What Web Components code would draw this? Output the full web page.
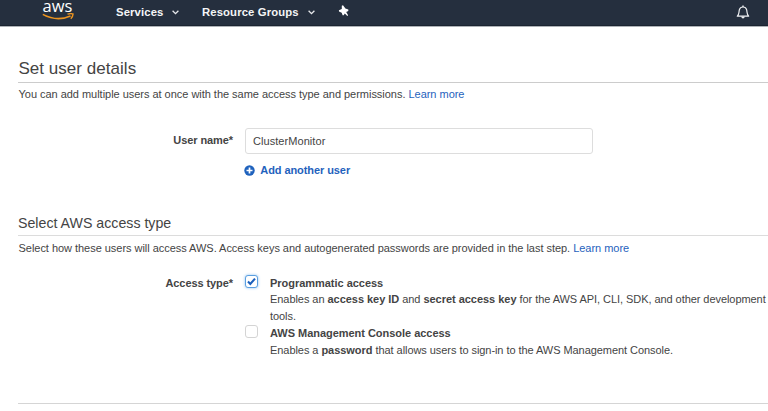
<!DOCTYPE html>
<html lang="en">
<head>
<meta charset="utf-8">
<title>Set user details</title>
<style>
html,body{margin:0;height:100%;overflow:hidden;background:#fff}
body{font:11px/17px "Liberation Sans",Arial,sans-serif;color:#444}
</style>
</head>
<body>
<iam-page></iam-page>
<script>
const define = (name, html) => customElements.define(name, class extends HTMLElement {
  constructor() {
    super();
    this.attachShadow({mode: 'open'}).innerHTML = html;
  }
});

define('aws-logo', `<style>
:host{display:flex;flex-direction:column;width:34px;height:25px;color:#fff}
span{font:16.500px/12px "Open Sans","Noto Sans",sans-serif;height:12px;padding-left:1px;margin-top:0}
svg{display:block;margin-top:1px}
</style><span>aws</span>
<svg width="34" height="9" viewBox="0 0 34 9" fill="none" stroke="#ec9420"><path d="M.8 1.400Q15 9 28.500 3" stroke-width="1.600"/><path d="M25.500 1.200Q29 .2 31 1Q31.200 3.200 28.800 5.700" stroke-width="1.400"/></svg>`);

define('nav-menu', `<style>
:host{display:flex;align-items:center;font-weight:bold;font-size:11.300px;color:#f4f5f6;white-space:nowrap}
span{letter-spacing:var(--track,.12px)}
svg{margin-left:9px}
</style><span><slot></slot></span>
<svg width="7" height="5" viewBox="0 0 7 5" fill="none" stroke="#e8eaed" stroke-width="1.300"><path d="M.6.700 3.500 3.600 6.400.700"/></svg>`);

define('pin-icon', `<style>:host{display:block;width:11px;height:12px}svg{display:block}</style>
<svg width="11" height="12" viewBox="0 0 11 12" fill="#fff"><path d="M3.800 .700 5 .200 7.400 3.400 10.300 4.500 10.300 6.100 8.200 6.900 10.100 10.300 9.300 10.900 6.800 8.600 5.700 10.300 4.600 10.200 3.700 7.800 1 6.500 .9 5.200 3.800 4Z"/></svg>`);

define('bell-icon', `<style>:host{display:block;width:14px;height:14px}svg{display:block}</style>
<svg width="14" height="14" viewBox="0 0 14 14"><path d="M1.300 11.200C3.400 9.400 2.700 7 3.400 4.600 3.900 2.900 5.200 2 7 2s3.100.9 3.600 2.600c.7 2.400 0 4.800 2.100 6.600Z" fill="none" stroke="#eef0f2" stroke-width="1.200" stroke-linejoin="round"/><path d="M6.300.600h1.400v1.500H6.300zM5.200 11.600h3.600q-.3 1.900-1.800 1.900t-1.800-1.900" fill="#eef0f2"/></svg>`);

define('console-header', `<style>
:host{display:flex;box-sizing:border-box;height:26px;padding:0 18px 0 41.500px;background:#252f3e;border-bottom:1px solid #1b2431;box-shadow:0 1px 0 #aeb2b7}
nav{display:flex;align-items:center;height:24px;margin-left:40.500px;flex:1}
.g{margin-left:22.500px;--track:.13px}
pin-icon{margin:-2px 0 0 23px}
bell-icon{margin:5px 0 0}
</style><aws-logo></aws-logo>
<nav><nav-menu>Services</nav-menu><nav-menu class="g">Resource Groups</nav-menu><pin-icon></pin-icon></nav><bell-icon></bell-icon>`);

define('section-title', `<style>
:host{display:block;margin-left:18px;color:#444;border-bottom:1px solid #ccc;box-sizing:border-box;white-space:nowrap}
</style><slot></slot>`);

define('text-link', `<style>:host{color:#1f62bd}</style><slot></slot>`);

define('text-input', `<style>
:host{display:block;box-sizing:border-box;width:348px;height:26px;border:1.500px solid #ddd;border-radius:3px;padding:4px 7px 3px;color:#444;letter-spacing:.06px}
</style><slot></slot>`);

define('add-button', `<style>
:host{display:flex;align-items:center;font-weight:bold;color:#1f62bd;gap:5px;letter-spacing:-.08px;margin-left:-.7px}
svg{display:block}
</style><svg width="11" height="11" viewBox="0 0 11 11"><circle cx="5.500" cy="5.500" r="5.200" fill="#1f62bd"/><path d="M5.500 2.500v6M2.500 5.500h6" stroke="#fff" stroke-width="1.700"/></svg><span><slot></slot></span>`);

define('check-box', `<style>
:host{display:block;box-sizing:border-box;width:13px;height:13px;border:1px solid #d4d4d4;border-radius:3px;background:#fff}
:host([checked]){border-color:#5b9fe0;box-shadow:0 0 3px #8fc1f0}
svg{display:none}
:host([checked]) svg{display:block}
</style><svg width="11" height="11" viewBox="0 0 11 11" fill="none" stroke="#1c60bc" stroke-width="2.100"><path d="M2 5.600 4.300 8 9 2.600"/></svg>`);

define('access-option', `<style>
:host{display:grid;grid-template-columns:13px 1fr;column-gap:12px}
check-box{margin-top:.3px}
</style><check-box></check-box><div><slot></slot></div>`);

define('form-row', `<style>
:host{display:grid;grid-template-columns:233px 1fr;column-gap:12px}
.label{font-weight:bold;text-align:right;color:#444;padding-top:var(--label-top,0);letter-spacing:-.08px}
</style><div class="label"><slot name="label"></slot></div><div><slot></slot></div>`);

define('iam-page', `<style>
:host{display:block;width:768px;height:411px;overflow:hidden}
p{margin:0 0 0 18.500px;white-space:nowrap}
.t1{font-size:17px;line-height:27px;margin-top:29px;height:28px;letter-spacing:.04px;text-indent:.4px}
.p1{margin-top:3px;letter-spacing:-.028px}
.name{margin-top:25px;--label-top:4px}
add-button{margin-top:8px}
.t2{font-size:14.200px;line-height:26px;margin-top:31px;height:26px;border-color:#dcdcdc}
.p2{margin-top:4px;letter-spacing:-.034px}
.type{margin-top:17.600px;line-height:16.800px}
.type div{white-space:nowrap;letter-spacing:-.06px}
.type b{letter-spacing:-.03px}
.end{height:1px;background:#d5d5d5;margin:44.400px 0 0 18px}
</style>
<console-header></console-header>
<section-title class="t1">Set user details</section-title>
<p class="p1"><span>You can add multiple users at once with the same access type and permissions.</span> <text-link>Learn more</text-link></p>
<form-row class="name"><span slot="label">User name*</span><text-input>ClusterMonitor</text-input><add-button>Add another user</add-button></form-row>
<section-title class="t2">Select AWS access type</section-title>
<p class="p2"><span>Select how these users will access AWS. Access keys and autogenerated passwords are provided in the last step.</span> <text-link>Learn more</text-link></p>
<form-row class="type"><span slot="label">Access type*</span>
<access-option checked><div><b>Programmatic access</b></div><div>Enables an <b>access key ID</b> and <b>secret access key</b> for the AWS API, CLI, SDK, and other development</div><div>tools.</div></access-option>
<access-option><div><b>AWS Management Console access</b></div><div>Enables a <b>password</b> that allows users to sign-in to the AWS Management Console.</div></access-option>
</form-row>
<div class="end"></div>`);

for (const el of document.querySelector('iam-page').shadowRoot.querySelectorAll('access-option[checked]'))
  el.shadowRoot.querySelector('check-box').setAttribute('checked', '');
</script>
</body>
</html>
